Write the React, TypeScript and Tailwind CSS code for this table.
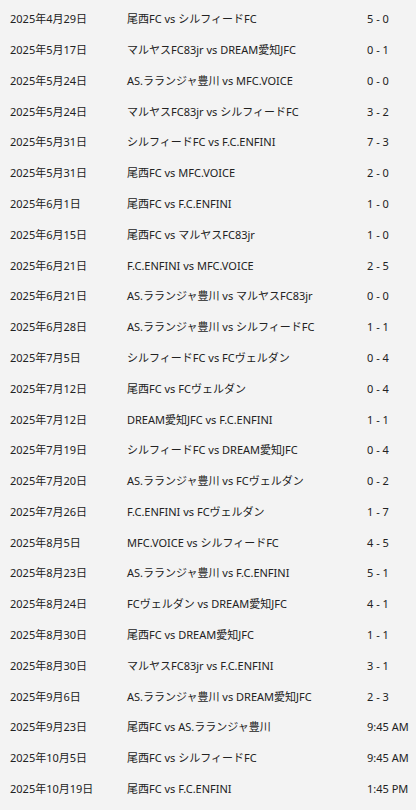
const matches: [string, string, string][] = [
  ["2025年4月29日", "尾西FC vs シルフィードFC", "5 - 0"],
  ["2025年5月17日", "マルヤスFC83jr vs DREAM愛知JFC", "0 - 1"],
  ["2025年5月24日", "AS.ラランジャ豊川 vs MFC.VOICE", "0 - 0"],
  ["2025年5月24日", "マルヤスFC83jr vs シルフィードFC", "3 - 2"],
  ["2025年5月31日", "シルフィードFC vs F.C.ENFINI", "7 - 3"],
  ["2025年5月31日", "尾西FC vs MFC.VOICE", "2 - 0"],
  ["2025年6月1日", "尾西FC vs F.C.ENFINI", "1 - 0"],
  ["2025年6月15日", "尾西FC vs マルヤスFC83jr", "1 - 0"],
  ["2025年6月21日", "F.C.ENFINI vs MFC.VOICE", "2 - 5"],
  ["2025年6月21日", "AS.ラランジャ豊川 vs マルヤスFC83jr", "0 - 0"],
  ["2025年6月28日", "AS.ラランジャ豊川 vs シルフィードFC", "1 - 1"],
  ["2025年7月5日", "シルフィードFC vs FCヴェルダン", "0 - 4"],
  ["2025年7月12日", "尾西FC vs FCヴェルダン", "0 - 4"],
  ["2025年7月12日", "DREAM愛知JFC vs F.C.ENFINI", "1 - 1"],
  ["2025年7月19日", "シルフィードFC vs DREAM愛知JFC", "0 - 4"],
  ["2025年7月20日", "AS.ラランジャ豊川 vs FCヴェルダン", "0 - 2"],
  ["2025年7月26日", "F.C.ENFINI vs FCヴェルダン", "1 - 7"],
  ["2025年8月5日", "MFC.VOICE vs シルフィードFC", "4 - 5"],
  ["2025年8月23日", "AS.ラランジャ豊川 vs F.C.ENFINI", "5 - 1"],
  ["2025年8月24日", "FCヴェルダン vs DREAM愛知JFC", "4 - 1"],
  ["2025年8月30日", "尾西FC vs DREAM愛知JFC", "1 - 1"],
  ["2025年8月30日", "マルヤスFC83jr vs F.C.ENFINI", "3 - 1"],
  ["2025年9月6日", "AS.ラランジャ豊川 vs DREAM愛知JFC", "2 - 3"],
  ["2025年9月23日", "尾西FC vs AS.ラランジャ豊川", "9:45 AM"],
  ["2025年10月5日", "尾西FC vs シルフィードFC", "9:45 AM"],
  ["2025年10月19日", "尾西FC vs F.C.ENFINI", "1:45 PM"],
];

export default function App() {
  return (
    <main
      className="min-h-screen bg-[#f3f3f3] text-[#222] text-[11px] pt-[4px]"
      style={{ fontFamily: '"Noto Sans", "Noto Sans CJK JP", sans-serif' }}
    >
      {matches.map(([date, game, score], i) => (
        <div key={i} className="flex items-center h-[30.8px] pl-[10px]">
          <div className="w-[117px] shrink-0">{date}</div>
          <div className="flex-1 whitespace-nowrap">{game}</div>
          <div className="w-[49px] shrink-0">{score}</div>
        </div>
      ))}
    </main>
  );
}
